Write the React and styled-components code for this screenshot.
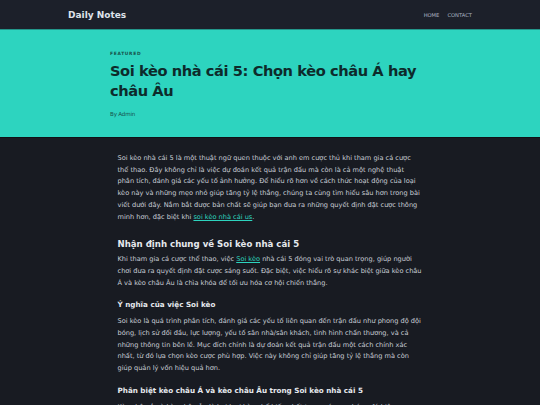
import styled, { createGlobalStyle } from "styled-components";

const Global = createGlobalStyle`
	html, body {
		margin: 0;
		padding: 0;
		background: #181b22;
	}
	body {
		font-family: "DejaVu Sans", "Noto Sans", sans-serif;
	}
	* {
		box-sizing: border-box;
	}
`;

export default function App() {
	return (
		<>
			<Global />
			<Header>
				<HeaderInner>
					<Brand>Daily Notes</Brand>
					<Nav>
						<a href="#">Home</a>
						<a href="#">Contact</a>
					</Nav>
				</HeaderInner>
			</Header>
			<Hero>
				<HeroInner>
					<Kicker>Featured</Kicker>
					<Title>Soi kèo nhà cái 5: Chọn kèo châu Á hay châu Âu</Title>
					<Byline>By Admin</Byline>
				</HeroInner>
			</Hero>
			<Article>
				<p>
					Soi kèo nhà cái 5 là một thuật ngữ quen thuộc với anh em cược thủ khi tham gia cá cược thể thao. Đây không chỉ là việc dự đoán kết quả trận đấu mà còn là cả một nghệ thuật phân tích, đánh giá các yếu tố ảnh hưởng. Để hiểu rõ hơn về cách thức hoạt động của loại kèo này và những mẹo nhỏ giúp tăng tỷ lệ thắng, chúng ta cùng tìm hiểu sâu hơn trong bài viết dưới đây. Nắm bắt được bản chất sẽ giúp bạn đưa ra những quyết định đặt cược thông minh hơn, đặc biệt khi <a href="#">soi kèo nhà cái us</a>.
				</p>
				<H2>Nhận định chung về Soi kèo nhà cái 5</H2>
				<p>
					Khi tham gia cá cược thể thao, việc <a href="#">Soi kèo</a> nhà cái 5 đóng vai trò quan trọng, giúp người chơi đưa ra quyết định đặt cược sáng suốt. Đặc biệt, việc hiểu rõ sự khác biệt giữa kèo châu Á và kèo châu Âu là chìa khóa để tối ưu hóa cơ hội chiến thắng.
				</p>
				<H3>Ý nghĩa của việc Soi kèo</H3>
				<p>
					Soi kèo là quá trình phân tích, đánh giá các yếu tố liên quan đến trận đấu như phong độ đội bóng, lịch sử đối đầu, lực lượng, yếu tố sân nhà/sân khách, tình hình chấn thương, và cả những thông tin bên lề. Mục đích chính là dự đoán kết quả trận đấu một cách chính xác nhất, từ đó lựa chọn kèo cược phù hợp. Việc này không chỉ giúp tăng tỷ lệ thắng mà còn giúp quản lý vốn hiệu quả hơn.
				</p>
				<H3>Phân biệt kèo châu Á và kèo châu Âu trong Soi kèo nhà cái 5</H3>
				<p>
					Kèo châu Á và kèo châu Âu là hai loại kèo phổ biến nhất trong cá cược bóng đá hiện nay.
				</p>
			</Article>
		</>
	);
}

const Header = styled.header`
	height: 30px;
	background: #1c202a;
	border-bottom: 1px solid #23968a;
`;

const HeaderInner = styled.div`
	width: 404px;
	height: 100%;
	margin: 0 auto;
	display: flex;
	align-items: center;
	justify-content: space-between;
`;

const Brand = styled.div`
	font-size: 9px;
	font-weight: 700;
	color: #dfe3ea;
`;

const Nav = styled.nav`
	display: flex;
	gap: 8px;
	a {
		font-size: 5.2px;
		text-transform: uppercase;
		color: #aeb6c4;
		text-decoration: none;
	}
`;

const Hero = styled.section`
	background: #2dd4bf;
	padding: 21px 0 20px;
	border-bottom: 1px solid #0f1116;
`;

const HeroInner = styled.div`
	width: 320px;
	margin: 0 auto;
`;

const Kicker = styled.div`
	font-size: 4.4px;
	font-weight: 700;
	text-transform: uppercase;
	letter-spacing: 0.7px;
	color: #17514b;
`;

const Title = styled.h1`
	margin: 5px 0 10px;
	font-size: 14.6px;
	line-height: 20px;
	font-weight: 700;
	letter-spacing: -0.4px;
	color: #0d2b2b;
`;

const Byline = styled.div`
	font-size: 5.6px;
	color: #17514b;
	letter-spacing: -0.2px;
`;

const Article = styled.main`
	width: 305px;
	margin: 0 auto;
	padding-top: 15px;
	color: #c9ced6;
	p {
		margin: 0 0 10px;
		font-size: 6.6px;
		line-height: 11.7px;
	}
	a {
		color: #2dd4bf;
	}
`;

const H2 = styled.h2`
	margin: 15px 0 4px;
	font-size: 8.6px;
	line-height: 12px;
	font-weight: 700;
	color: #e6e9ee;
`;

const H3 = styled.h3`
	margin: 10px 0 6px;
	font-size: 7.2px;
	line-height: 11px;
	font-weight: 700;
	color: #e6e9ee;
`;
